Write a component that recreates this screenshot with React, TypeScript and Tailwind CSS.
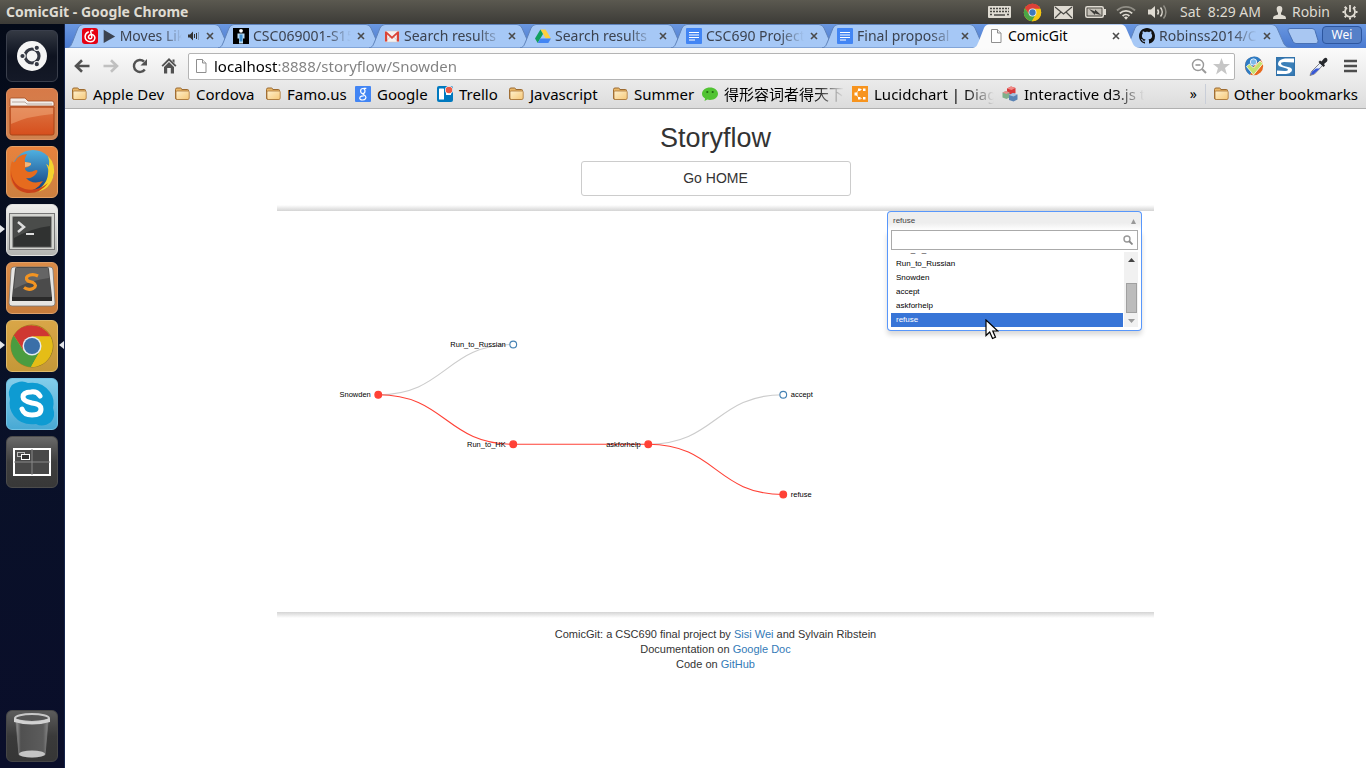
import React from "react";

const UI = "font-['Noto_Sans','Noto_Sans_CJK_SC',sans-serif]";

/* ---------- favicons and small glyphs ---------- */

function FolderIcon() {
  return (
    <svg width="16" height="16" viewBox="0 0 16 16" aria-hidden="true">
      <defs>
        <linearGradient id="fold" x1="0" y1="0" x2="1" y2="1">
          <stop offset="0" stopColor="#fff0cc" />
          <stop offset="1" stopColor="#f6c878" />
        </linearGradient>
      </defs>
      <path d="M1.5 3.5q0-1.5 1.5-1.5h3.5q1 0 1.300 1.500h5.700q1 0 1 1v7.500q0 1.500-1.500 1.500h-10q-1.500 0-1.500-1.500z" fill="#e9b767" stroke="#9c6a30" />
      <path d="M2 6q0-1 1-1h11.500q.7 0 .7 1v6q0 1.500-1.500 1.500H3.500q-1.500 0-1.500-1.500z" fill="url(#fold)" stroke="#a9773c" strokeWidth=".8" />
    </svg>
  );
}

function PageIcon() {
  return (
    <svg width="16" height="16" viewBox="0 0 16 16" aria-hidden="true">
      <path d="M3.500 1.500h6l3.500 3.500v9.500h-9.500z" fill="#fff" stroke="#8f8f8f" />
      <path d="M9.500 1.500v3.500h3.500" fill="#eee" stroke="#8f8f8f" />
    </svg>
  );
}

function MusicIcon() {
  return (
    <svg width="16" height="16" viewBox="0 0 16 16" aria-hidden="true">
      <rect width="16" height="16" rx="3" fill="#e60012" />
      <path d="M10.800 2.600c-1.300-.7-2.300.2-2 1.500l1 4.300c.3 1.600-.8 2.400-1.900 2.300-1.300-.2-1.900-1.700-1.100-2.900.7-1.100 2.100-1.500 3.400-1.200 2 .4 3 2.200 2.600 4-.4 1.900-2.300 3.100-4.500 3.100-3.100 0-5.300-2.300-5.200-5.200.1-2 1.300-3.700 3.200-4.500" fill="none" stroke="#fff" strokeWidth="1.500" strokeLinecap="round" />
    </svg>
  );
}

function SfsuIcon() {
  return (
    <svg width="16" height="16" viewBox="0 0 16 16" aria-hidden="true">
      <rect width="16" height="16" fill="#000" />
      <circle cx="8" cy="2.800" r="1.900" fill="#fff" />
      <path d="M4.500 5.500h7v5h-1.500v5h-4v-5h-1.500z" fill="#b9dcf5" />
      <path d="M6.500 6.500h3v7h-3z" fill="#3f8fd0" />
    </svg>
  );
}

function GmailIcon() {
  return (
    <svg width="16" height="16" viewBox="0 0 16 16" aria-hidden="true">
      <rect x="1" y="3" width="14" height="11" rx="1" fill="#f5f2f0" stroke="#c9c2c0" strokeWidth=".5" />
      <path d="M2.500 13 6.500 8.500M13.500 13l-4-4.500" stroke="#d5cfcd" fill="none" />
      <path d="M1 13.500V3.500h1.500L8 8.500l5.500-5H15v10h-2.200V6.600L8 10.900 3.200 6.600v6.900z" fill="#db4437" />
    </svg>
  );
}

function DriveIcon() {
  return (
    <svg width="16" height="16" viewBox="0 0 16 16" aria-hidden="true">
      <path d="M5.400 1.500h5.200L16 10.500h-5.200z" fill="#ffcf3f" />
      <path d="M5.400 1.500 8 6 2.700 15 0 10.500z" fill="#11a05e" />
      <path d="M5.400 10.500H16L13.300 15H2.700z" fill="#4285f4" />
    </svg>
  );
}

function DocsIcon() {
  return (
    <svg width="16" height="16" viewBox="0 0 16 16" aria-hidden="true">
      <rect width="16" height="16" rx="1" fill="#4285f4" />
      <path d="M3 4.500h10M3 7h10M3 9.500h10M3 12h6" stroke="#fff" strokeWidth="1.200" />
    </svg>
  );
}

function GithubIcon() {
  return (
    <svg width="16" height="16" viewBox="0 0 16 16" aria-hidden="true">
      <path
        fill="#111"
        d="M8 0C3.580 0 0 3.580 0 8c0 3.540 2.290 6.530 5.470 7.590.4.070.55-.17.55-.38 0-.19-.01-.82-.01-1.490-2.010.37-2.530-.49-2.690-.94-.09-.23-.48-.94-.82-1.130-.28-.15-.68-.52-.01-.53.63-.01 1.080.58 1.230.82.72 1.210 1.870.87 2.330.66.07-.52.28-.87.51-1.070-1.780-.2-3.640-.89-3.640-3.950 0-.87.31-1.590.82-2.150-.08-.2-.36-1.020.08-2.120 0 0 .67-.21 2.200.82.64-.18 1.320-.27 2-.27s1.360.09 2 .27c1.530-1.040 2.200-.82 2.200-.82.44 1.100.16 1.920.08 2.120.51.56.82 1.270.82 2.150 0 3.070-1.870 3.750-3.650 3.950.29.25.54.73.54 1.480 0 1.070-.01 1.930-.01 2.200 0 .21.15.46.55.38A8.010 8.010 0 0 0 16 8c0-4.420-3.580-8-8-8"
      />
    </svg>
  );
}

function GoogleIcon() {
  return (
    <svg width="16" height="16" viewBox="0 0 16 16" aria-hidden="true">
      <rect width="16" height="16" rx="1" fill="#4285f4" />
      <ellipse cx="7.800" cy="5" rx="2.200" ry="2.500" fill="none" stroke="#fff" strokeWidth="1.200" />
      <path d="M8.500 2.300h2.800M9 7.200c-2.500 1 .2 1.600 1.200 2.600 1.800 1.900 0 4.200-2.500 4.200-2.400 0-3.700-1.600-2.600-3 .9-1 2.500-1.100 3.600-1.100" fill="none" stroke="#fff" strokeWidth="1.200" />
    </svg>
  );
}

function TrelloIcon() {
  return (
    <svg width="16" height="16" viewBox="0 0 16 16" aria-hidden="true">
      <rect width="16" height="16" rx="2" fill="#0079bf" />
      <rect x="2" y="2.500" width="5" height="11" rx=".6" fill="#fff" />
      <rect x="9" y="3" width="5" height="6" rx=".6" fill="#fff" />
      <circle cx="12" cy="4" r="4" fill="#fff" />
      <circle cx="12" cy="4" r="3.300" fill="#eb5a46" />
    </svg>
  );
}

function WechatIcon() {
  return (
    <svg width="16" height="16" viewBox="0 0 16 16" aria-hidden="true">
      <path d="M8 1.500c4.400 0 8 2.700 8 6.200s-3.600 6.200-8 6.200c-1 0-1.900-.1-2.700-.4L2.500 15l.6-2.600C1.200 11.300 0 9.600 0 7.700c0-3.500 3.600-6.200 8-6.200z" fill="#51c332" />
      <circle cx="5.300" cy="6" r="1.100" fill="#1f6a10" />
      <circle cx="10.700" cy="6" r="1.100" fill="#1f6a10" />
    </svg>
  );
}

function LucidIcon() {
  return (
    <svg width="16" height="16" viewBox="0 0 16 16" aria-hidden="true">
      <rect width="16" height="16" fill="#f7941e" />
      <path d="M9.500 3.500H7L4 8l3 4.500h2.500" fill="none" stroke="#fff" strokeDasharray="2 1" />
      <path d="M2.500 6.500h3v3h-3zM6 2.500h2.500V5H6zM6 11h2.500v2.500H6zM11 2.500h2.500V5H11zM11 11h2.500v2.500H11z" fill="#fff" />
    </svg>
  );
}

function CubesIcon() {
  return (
    <svg width="16" height="16" viewBox="0 0 16 16" aria-hidden="true">
      <path d="M5 2.500 9 .5l4.500 1.500v5L9.500 9 5 7.500z" fill="#d9383a" />
      <path d="M5 2.500 9.500 4l4-2L9 .5z" fill="#f08a86" />
      <path d="M.5 6.500 4 5l3.500 1.500v5L4.500 13 .5 11.500z" fill="#7fb08a" />
      <path d="M.5 6.500 4.500 8l3-1.500L4 5z" fill="#e98b8b" />
      <path d="M7 9l4-2 4.500 1.500v5l-4 2L7 14z" fill="#5a83b4" />
      <path d="M7 9l4.500 1.500 4-2L11 7z" fill="#a9c3df" />
    </svg>
  );
}

function CloseGlyph() {
  return (
    <svg width="8" height="8" viewBox="0 0 8 8" aria-hidden="true">
      <path d="M1 1l6 6M7 1L1 7" stroke="#4a4a4a" strokeWidth="1.600" />
    </svg>
  );
}

/* ---------- desktop panel ---------- */

function ChromeLogo({ size }: { size: number }) {
  return (
    <svg width={size} height={size} viewBox="0 0 48 48" aria-hidden="true">
      <circle cx="24" cy="24" r="22" fill="#f1c40f" />
      <path d="M24 24 4.950 13A22 22 0 0 1 43.050 13z" fill="#d93a35" />
      <path d="M4.950 13A22 22 0 0 1 43.700 14.500H24L15.500 29z" fill="#dd4038" />
      <path d="M4.950 13A22 22 0 0 0 22.500 45.950L32.500 29 24 33 15.500 29z" fill="#4aa546" />
      <path d="M43.700 14.500A22 22 0 0 1 22.500 45.950L32.500 29 33 20 24 14.500z" fill="#f3c613" />
      <circle cx="24" cy="24" r="10" fill="#eef3f8" />
      <circle cx="24" cy="24" r="8" fill="#3b78bd" />
    </svg>
  );
}

function TopPanel() {
  return (
    <header className="flex h-6 items-center justify-between bg-linear-to-b from-[#5b5950] to-[#3c3b37] pr-2 pl-1.5 text-sm text-[#dfdbd2]">
      <h1 className="font-bold">ComicGit - Google Chrome</h1>
      <div className="flex items-center">
        <svg className="mr-3" width="23" height="12" viewBox="0 0 23 12" aria-hidden="true">
          <rect width="23" height="12" rx="1" fill="#dfdbd2" />
          <path d="M2 2.500h19M2 5.500h19M2 8.500h2M19 8.500h2" stroke="#4a4944" strokeWidth="1.500" strokeDasharray="2 1" />
          <path d="M6 9h11" stroke="#4a4944" strokeWidth="1.500" />
        </svg>
        <span className="mr-3">
          <ChromeLogo size={19} />
        </span>
        <svg className="mr-3" width="19" height="13" viewBox="0 0 19 13" aria-hidden="true">
          <rect width="19" height="13" rx="1" fill="#dfdbd2" />
          <path d="M1 1l8.500 7L18 1M1 12l6-6M18 12l-6-6" fill="none" stroke="#4a4944" strokeWidth="1.200" />
        </svg>
        <svg className="mr-2.5" width="21" height="12" viewBox="0 0 21 12" aria-hidden="true">
          <rect x=".75" y=".75" width="17.500" height="10.500" rx="1.500" fill="none" stroke="#dfdbd2" strokeWidth="1.500" />
          <rect x="2.500" y="2.500" width="14" height="7" fill="#c3bfb6" />
          <rect x="19" y="3" width="2" height="6" fill="#dfdbd2" />
          <path d="M4 3l6 2.500V3.500L16 9l-6-1.500V9z" fill="#3c3b37" />
        </svg>
        <svg className="mr-3" width="20" height="15" viewBox="0 0 20 15" fill="none" aria-hidden="true">
          <path d="M1 5.500a13 13 0 0 1 18 0" stroke="#908e86" strokeWidth="1.800" />
          <path d="M3.800 8.300a9 9 0 0 1 12.400 0" stroke="#dfdbd2" strokeWidth="1.800" />
          <path d="M6.600 11a5 5 0 0 1 6.800 0" stroke="#dfdbd2" strokeWidth="1.800" />
          <path d="M8 12.500a3 3 0 0 1 4 0l-2 2.200z" fill="#dfdbd2" />
        </svg>
        <svg className="mr-3" width="20" height="16" viewBox="0 0 20 16" fill="none" aria-hidden="true">
          <path d="M0 5.500h3L7 2v12l-4-3.500H0z" fill="#dfdbd2" />
          <path d="M9.500 5.500a4 4 0 0 1 0 5" stroke="#dfdbd2" strokeWidth="1.500" />
          <path d="M12.500 3.500a7 7 0 0 1 0 9" stroke="#dfdbd2" strokeWidth="1.500" />
          <path d="M15.500 1.500a10 10 0 0 1 0 13" stroke="#908e86" strokeWidth="1.500" />
        </svg>
        <time className="mr-3 whitespace-pre">Sat  8:29 AM</time>
        <svg className="mr-1.5" width="13" height="13" viewBox="0 0 13 13" aria-hidden="true">
          <path d="M6.500 0C8.800 0 9.500 1.500 9.300 3.500 9.200 5 8.600 6.300 8 7v1.500l4 1.500q1 .5 1 3H0q0-2.500 1-3l4-1.500V7C4.400 6.300 3.800 5 3.700 3.500 3.500 1.500 4.200 0 6.500 0z" fill="#dfdbd2" />
        </svg>
        <span className="mr-3">Robin</span>
        <svg width="16" height="16" viewBox="0 0 16 16" fill="none" aria-hidden="true">
          <path d="M5 3.800a5 5 0 1 0 6 0" stroke="#dfdbd2" strokeWidth="1.800" />
          <path d="M8 1v7" stroke="#dfdbd2" strokeWidth="1.800" />
          <path d="M.5 8h2M13.500 8h2M8 13.500v2M2.700 2.700l1.500 1.500M13.300 2.700l-1.500 1.500M2.700 13.300l1.500-1.500M13.300 13.300l-1.500-1.500" stroke="#dfdbd2" strokeWidth="2" />
        </svg>
      </div>
    </header>
  );
}

/* ---------- launcher ---------- */

const tiles: { name: string; tone: string; art: React.ReactNode; left?: boolean; right?: boolean }[] = [
  {
    name: "Dash home",
    tone: "bg-linear-to-b from-[#343943] via-[#0e1320] to-[#141927] border-[#3a3f4c]",
    art: (
      <g>
        <circle cx="26" cy="26" r="15" fill="#f5f5f5" />
        <circle cx="26" cy="26" r="7" fill="none" stroke="#343843" strokeWidth="3.200" />
        <g fill="#343843" stroke="#f5f5f5" strokeWidth="1.200">
          <circle cx="16.500" cy="26" r="2.700" />
          <circle cx="30.800" cy="17.800" r="2.700" />
          <circle cx="30.800" cy="34.200" r="2.700" />
        </g>
      </g>
    ),
  },
  {
    name: "Files",
    tone: "bg-linear-to-b from-[#d77a48] to-[#cf8350] border-[#dd9163]",
    art: (
      <g>
        <path d="M4 18v-7q0-1 1-1h14l3 3h24q2 0 2 2v3z" fill="#f3eee9" stroke="#a34d25" strokeWidth=".8" />
        <path d="M6 14h13l2 2h25" fill="none" stroke="#b8a9a0" />
        <path d="M4 19h44v26q0 2-2 2H6q-2 0-2-2z" fill="url(#files)" stroke="#a84418" />
        <path d="M5 20h42v6Q22 28 5 36z" fill="#f5b384" opacity=".45" />
      </g>
    ),
  },
  {
    name: "Firefox",
    tone: "bg-linear-to-b from-[#e8823d] to-[#cc8040] border-[#e5a065]",
    art: (
      <g>
        <circle cx="27" cy="25" r="21" fill="url(#globe)" />
        <path d="M42 10q9 9 5 22-5 14-20 14 14-6 15-18 1-6-2-10 3 1 3 3 1-6-1-11z" fill="#f6d32d" />
        <path d="M6 15q2 3 4-1 2-5 11-6-3 5-2 8l6 1q1 3-6 5 0 3 4 4 3 0 7-2 3 0 0 4-4 5-10 4 6 7 17 3-7 11-19 11Q6 44 4 29 4 20 6 15z" fill="#e66b1e" />
        <path d="M5 25q1 14 14 18 12 3 23-6-8 11-21 10Q5 44 5 25z" fill="#c9421b" />
        <path d="M19 16l6 1q1 3-6 4z" fill="#f2b77c" />
      </g>
    ),
  },
  {
    name: "Terminal",
    tone: "bg-linear-to-b from-[#eeeeec] to-[#b4b5b2] border-[#e2e2e0]",
    left: true,
    art: (
      <g>
        <rect x="3.500" y="9.500" width="45" height="36" fill="#d3d4d0" stroke="#777" />
        <rect x="7" y="13" width="38" height="30" fill="#303231" stroke="#555" />
        <path d="M8 14h36v8Q26 24 8 34z" fill="#4a4c4a" />
        <path d="M12 18l6 5-6 5" fill="none" stroke="#ddd" strokeWidth="2.500" />
        <path d="M20 30h8" stroke="#ddd" strokeWidth="2" />
      </g>
    ),
  },
  {
    name: "Sublime Text",
    tone: "bg-linear-to-b from-[#db8c48] to-[#c77c3c] border-[#dfa069]",
    art: (
      <g>
        <path d="M5 8q0-3 3-3h36q3 0 3 3l2 33q0 3-3 3H6q-3 0-3-3z" fill="#e6e5e3" stroke="#777" strokeWidth=".8" />
        <path d="M9 7q0-2 2-2h30q2 0 2 2l3 28H6z" fill="#4b4b4b" />
        <path d="M6 35h40v4H6z" fill="#2a2a2a" />
        <path d="M10 6h32l1 10Q25 18 8 27z" fill="#777" opacity=".6" />
        <path d="M32 14q-4-2-8-1-6 2-2 6l5 1.500q5 3 0 6-5 2-9-1" fill="none" stroke="#f29422" strokeWidth="3.200" />
      </g>
    ),
  },
  {
    name: "Google Chrome",
    tone: "bg-linear-to-b from-[#d9a647] to-[#c59838] border-[#dfba6b]",
    left: true,
    right: true,
    art: (
      <g>
        <circle cx="26" cy="26" r="21" fill="#f1c40f" stroke="#8d7224" strokeWidth=".8" />
        <path d="M7.800 15.500A21 21 0 0 1 44.300 16.500H26L17.800 31z" fill="#cf3832" />
        <path d="M7.800 15.500A21 21 0 0 0 25 47L34.200 30.700 26 35 17.800 31z" fill="#4a9c40" />
        <path d="M44.300 16.500A21 21 0 0 1 25 47L34.200 30.700 35 21 26 16.500z" fill="#e5bd17" />
        <circle cx="26" cy="26" r="9.500" fill="#e4ebf2" />
        <circle cx="26" cy="26" r="8" fill="#3a6fa8" />
      </g>
    ),
  },
  {
    name: "Skype",
    tone: "bg-linear-to-b from-[#83cdea] to-[#48a9d4] border-[#74c3e4]",
    art: (
      <g>
        <path d="M6 7q9-6 16-2 14-2 22 9 5 7 3 16 3 8-2 14-8 6-15 2-14 2-22-8-6-8-4-17-3-8 2-14z" fill="#0e9bd2" />
        <path d="M34 18q-3-5-9-4-8 0-8 5 0 4 9 6 9 1 9 6 0 6-9 6-8 0-10-6" fill="none" stroke="#fff" strokeWidth="5" strokeLinecap="round" />
      </g>
    ),
  },
  {
    name: "Workspace switcher",
    tone: "bg-linear-to-b from-[#6a6a6a] via-[#3d3d3d] to-[#383838] border-[#4c4c4c]",
    art: (
      <g fill="none">
        <rect x="8" y="13" width="36" height="26" fill="#484848" stroke="#fff" strokeWidth="2" />
        <path d="M26 13v26M8 26h36" stroke="#888" />
        <rect x="11.500" y="16.500" width="7" height="4" stroke="#bbb" />
        <rect x="15.500" y="18.500" width="8" height="5" fill="#333" stroke="#fff" />
      </g>
    ),
  },
];

function Tile({ name, tone, art, left, right }: (typeof tiles)[number]) {
  return (
    <div className="relative flex w-full justify-center">
      {left && (
        <svg className="absolute top-5 left-0" width="5" height="10" viewBox="0 0 5 10" aria-hidden="true">
          <path d="M0 1l5 4-5 4z" fill="#e4e6ea" />
        </svg>
      )}
      <button type="button" aria-label={name} className={"flex size-[52px] items-center justify-center rounded-md border " + tone}>
        <svg width="52" height="52" viewBox="0 0 52 52" className="shrink-0" aria-hidden="true">
          {art}
        </svg>
      </button>
      {right && (
        <svg className="absolute top-5 right-0" width="5" height="10" viewBox="0 0 5 10" aria-hidden="true">
          <path d="M5 1L0 5l5 4z" fill="#e4e6ea" />
        </svg>
      )}
    </div>
  );
}

function Launcher() {
  return (
    <nav aria-label="Launcher" className="flex w-[65px] shrink-0 flex-col gap-1.5 border-r border-[#16254c] bg-linear-to-b from-[#040a18] via-[#091128] to-[#0a0e2a] py-1.5">
      <svg width="0" height="0" className="absolute" aria-hidden="true">
        <defs>
          <linearGradient id="files" x1="0" y1="0" x2="0" y2="1">
            <stop offset="0" stopColor="#dc7442" />
            <stop offset="1" stopColor="#d64f1d" />
          </linearGradient>
          <linearGradient id="globe" x1="0" y1="0" x2="0" y2="1">
            <stop offset="0" stopColor="#4fb0e0" />
            <stop offset="1" stopColor="#103a7c" />
          </linearGradient>
          <linearGradient id="glass" x1="0" y1="0" x2="1" y2="0">
            <stop offset="0" stopColor="#999" />
            <stop offset=".15" stopColor="#505050" />
            <stop offset=".85" stopColor="#5c5c5c" />
            <stop offset="1" stopColor="#888" />
          </linearGradient>
        </defs>
      </svg>
      {tiles.map((t) => (
        <Tile key={t.name} {...t} />
      ))}
      <div className="mt-auto">
        <Tile
          name="Trash"
          tone="bg-linear-to-b from-[#5c5c5c] via-[#3a3a3a] to-[#363636] border-[#464646]"
          art={
            <g>
              <path d="M10 12h32l-3 33q-13 4-26 0z" fill="url(#glass)" stroke="#777" strokeWidth=".8" />
              <ellipse cx="26" cy="44" rx="13" ry="3.500" fill="#c4c4c4" />
              <ellipse cx="26" cy="8" rx="17" ry="4" fill="#555" stroke="#c8c8c8" strokeWidth="2" />
              <path d="M8 8q18 8 36 0v4q-18 5-36 0z" fill="#d2d2d2" />
            </g>
          }
        />
      </div>
    </nav>
  );
}

/* ---------- browser chrome ---------- */

const tabs: { title: string; icon: React.ReactNode; active?: boolean; sound?: boolean }[] = [
  { title: "▶ Moves Like", icon: <MusicIcon />, sound: true },
  { title: "CSC069001-S15", icon: <SfsuIcon /> },
  { title: "Search results", icon: <GmailIcon /> },
  { title: "Search results", icon: <DriveIcon /> },
  { title: "CSC690 Project", icon: <DocsIcon /> },
  { title: "Final proposal", icon: <DocsIcon /> },
  { title: "ComicGit", icon: <PageIcon />, active: true },
  { title: "Robinss2014/C", icon: <GithubIcon /> },
];

const FADE = "[mask-image:linear-gradient(to_right,black_75%,transparent)]";

function TabStrip() {
  return (
    <div className="flex h-6 items-end bg-linear-to-b from-[#6a97e0] to-[#4a7ad0] pr-1 pl-0.5">
      {tabs.map((t, i) => (
        <div key={i} className={"relative -mr-4 flex h-6 w-[167px] min-w-0 items-center pr-5 pl-[15px] " + (t.active ? "z-10" : "")}>
          <svg className="absolute inset-0 size-full" viewBox="0 0 167 24" preserveAspectRatio="none" aria-hidden="true">
            <path d="M0 24C4 23 4 21 5.500 18L11 4Q12.500 .5 16 .5H148Q151.500 .5 153 4L160 20Q161.500 23.500 167 24Z" fill={t.active ? "#fbfbfb" : "#a6c8f6"} stroke={t.active ? "#fbfbfb" : "#5f83bb"} strokeWidth={t.active ? 0 : 1} />
          </svg>
          <a href="#" className="relative flex min-w-0 flex-1 items-center gap-1">
            <span className="shrink-0">{t.icon}</span>
            <span className={"flex-1 overflow-hidden text-sm leading-6 whitespace-nowrap " + (t.active ? "text-black" : "text-[#3c4350] " + FADE)}>{t.title}</span>
          </a>
          {t.sound && (
            <svg className="relative ml-1.5" width="12" height="10" viewBox="0 0 12 10" fill="none" aria-hidden="true">
              <path d="M0 3.500h2L5 .5v9l-3-3H0z" fill="#333" />
              <path d="M6.500 3v4M8.500 2v6" stroke="#333" />
              <path d="M10.500 1v8" stroke="#8098b8" />
            </svg>
          )}
          <button type="button" aria-label={"Close " + t.title} className="relative ml-1.5 shrink-0">
            <CloseGlyph />
          </button>
        </div>
      ))}
      <button type="button" aria-label="New tab" className="ml-3 self-center">
        <svg width="32" height="16" viewBox="0 0 32 16" aria-hidden="true">
          <path d="M3 .5h22q2 0 3 2l3 10q.5 3-2 3H9q-2 0-3-2L1 3q-.5-2.500 2-2.500z" fill="#a9c7f2" stroke="#4870b4" />
        </svg>
      </button>
      <button type="button" className="mb-1 ml-auto h-[18px] w-10 rounded-sm border border-[#2d569f] bg-[#5580c8] text-xs leading-4 text-white">
        Wei
      </button>
    </div>
  );
}

function Toolbar() {
  return (
    <div className="flex h-9 items-center bg-linear-to-b from-[#fbfbfb] to-[#e9e9e9] pr-[9px] pl-[9px]">
      <button type="button" aria-label="Back" className="mr-[13px]">
        <svg width="16" height="14" viewBox="0 0 16 14" fill="none" aria-hidden="true">
          <path d="M15.500 7H2.500M8 1.200 2 7l6 5.800" stroke="#525252" strokeWidth="2.600" />
        </svg>
      </button>
      <button type="button" aria-label="Forward" className="mr-[13px]">
        <svg width="16" height="14" viewBox="0 0 16 14" fill="none" aria-hidden="true">
          <path d="M.5 7h13M8 1.200 14 7l-6 5.800" stroke="#c0c0c0" strokeWidth="2.600" />
        </svg>
      </button>
      <button type="button" aria-label="Reload" className="mr-[13px]">
        <svg width="16" height="16" viewBox="0 0 16 16" fill="none" aria-hidden="true">
          <path d="M12.800 11.500A6 6 0 1 1 12 3.500" stroke="#525252" strokeWidth="2.400" />
          <path d="M15 1v6.500H8.500z" fill="#525252" />
        </svg>
      </button>
      <button type="button" aria-label="Home" className="mr-[11px]">
        <svg width="16" height="16" viewBox="0 0 16 16" aria-hidden="true">
          <path d="M8 0l7.500 7.500-1.300 1.300L8 2.700 1.800 8.800.5 7.500zM11.500 1.500h2v3.500l-2-2z" fill="#525252" />
          <path d="M8 4l5 5v6.500H9.800V10H6.200v5.500H3V9z" fill="#525252" />
        </svg>
      </button>
      <div className="flex h-[27px] min-w-0 flex-1 items-center rounded-xs border border-[#b4b4b4] bg-white pr-1 pl-1">
        <PageIcon />
        <input
          type="text"
          aria-label="Address"
          defaultValue="localhost:8888/storyflow/Snowden"
          className="ml-[5px] min-w-0 flex-1 bg-[linear-gradient(to_right,#000_64px,#808080_64px)] bg-clip-text text-[15px] leading-6 text-transparent outline-none"
        />
        <svg width="16" height="16" viewBox="0 0 16 16" fill="none" aria-hidden="true">
          <circle cx="7" cy="7" r="5.500" stroke="#999" strokeWidth="1.400" />
          <path d="M4.500 7h5" stroke="#888" strokeWidth="1.400" />
          <path d="M11 11l4 4" stroke="#999" strokeWidth="2" />
        </svg>
        <svg className="ml-1.5" width="17" height="17" viewBox="0 0 17 17" aria-hidden="true">
          <path d="M8.500 0l2.200 6H17l-5 4 1.900 6.500-5.400-3.900-5.400 3.900L5 10 0 6h6.300z" fill="#c6c6c6" />
        </svg>
      </div>
      <button type="button" aria-label="Check extension" className="ml-[9px]">
        <svg width="20" height="20" viewBox="0 0 20 20" aria-hidden="true">
          <circle cx="10" cy="10" r="9.200" fill="#e86a1e" />
          <path d="M1 9A9 9 0 0 1 17 4L10 9 6 19Q1 16 1 9z" fill="#2e7cc4" />
          <circle cx="9.500" cy="6" r="3.200" fill="#7db8ea" stroke="#fff" strokeWidth=".8" />
          <path d="M2.500 10.500l3-2.500 4 4 6.500-7 3 2.500L9.500 19z" fill="#c5e26d" stroke="#fff" strokeWidth=".8" />
        </svg>
      </button>
      <button type="button" aria-label="Stylish" className="ml-3">
        <svg width="19" height="19" viewBox="0 0 19 19" fill="none" aria-hidden="true">
          <rect x=".75" y=".75" width="17.500" height="17.500" fill="#3a7fb8" stroke="#3273ab" strokeWidth="1.500" />
          <path d="M18 5.500L8 5Q5 5 5 6.500T8 9l6 1.500Q17 12 15.500 14.500 14 16.500 10 17H1v-3.500l8 .5q3 0 3-1.200T9 11L4 9.500Q1 8 2.500 5 4 2 9 1.500h9z" fill="#fff" />
        </svg>
      </button>
      <button type="button" aria-label="Color picker" className="ml-3.5">
        <svg width="19" height="19" viewBox="0 0 19 19" aria-hidden="true">
          <path d="M11 6l2.500 2.500-8 8.500-4.500 1.500L2.500 14.500z" fill="#e8eefb" stroke="#777" strokeWidth=".9" />
          <path d="M7 11.500h4L5 17l-3.500 1 1.500-3.500z" fill="#3758d6" />
          <path d="M9.500 5l1.500-1.500 1.500 1L15 1.500q2-1.500 3 0t0 3L15 7l1 1.500-1.500 1.500z" fill="#26282c" />
        </svg>
      </button>
      <button type="button" aria-label="Menu" className="ml-4">
        <svg width="13" height="14" viewBox="0 0 13 14" aria-hidden="true">
          <path d="M0 2h13M0 7h13M0 12h13" stroke="#4d4d4d" strokeWidth="2.600" />
        </svg>
      </button>
    </div>
  );
}

const bookmarks: { label: string; icon: React.ReactNode; width: string; long?: boolean }[] = [
  { label: "Apple Dev", icon: <FolderIcon />, width: "w-[103px]" },
  { label: "Cordova", icon: <FolderIcon />, width: "w-[91px]" },
  { label: "Famo.us", icon: <FolderIcon />, width: "w-[90px]" },
  { label: "Google", icon: <GoogleIcon />, width: "w-[82px]" },
  { label: "Trello", icon: <TrelloIcon />, width: "w-[71px]" },
  { label: "Javascript", icon: <FolderIcon />, width: "w-[104px]" },
  { label: "Summer", icon: <FolderIcon />, width: "w-[90px]" },
  { label: "得形容词者得天下", icon: <WechatIcon />, width: "w-[150px]", long: true },
  { label: "Lucidchart | Diagr", icon: <LucidIcon />, width: "w-[150px]", long: true },
  { label: "Interactive d3.js t", icon: <CubesIcon />, width: "w-[150px]", long: true },
];

function BookmarksBar() {
  return (
    <nav aria-label="Bookmarks" className="flex h-[25px] items-start border-b border-[#b0b0b0] bg-linear-to-b from-[#e9e9e9] to-[#dcdcdc] pr-2 pl-1.5 text-[15px] leading-5 text-black">
      {bookmarks.map((b) => (
        <a key={b.label} href="#" className={"flex items-center gap-1.5 " + b.width}>
          <span className="shrink-0">{b.icon}</span>
          <span className={"whitespace-nowrap " + (b.long ? "mr-2 overflow-hidden " + FADE : "")}>{b.label}</span>
        </a>
      ))}
      <button type="button" aria-label="More bookmarks" className="mr-2 ml-auto text-sm leading-5">
        »
      </button>
      <a href="#" className="flex items-center gap-[5px] border-l border-[#c9ced8] pl-[7px] whitespace-nowrap">
        <FolderIcon />
        Other bookmarks
      </a>
    </nav>
  );
}

/* ---------- page ---------- */

const nodes = [
  { name: "Snowden", x: 135, y: 245, on: true, end: true },
  { name: "Run_to_Russian", x: 315, y: 178, on: false, end: true },
  { name: "Run_to_HK", x: 315, y: 311, on: true, end: true },
  { name: "askforhelp", x: 495, y: 311, on: true, end: true },
  { name: "accept", x: 675, y: 245, on: false, end: false },
  { name: "refuse", x: 675, y: 378, on: true, end: false },
];

const links: [number, number, boolean][] = [
  [0, 1, false],
  [3, 4, false],
  [0, 2, true],
  [2, 3, true],
  [3, 5, true],
];

function StoryTree() {
  return (
    <svg width="600" height="402" viewBox="0 0 800 536" className="min-w-0" role="img" aria-label="Story tree">
      {links.map(([a, b, on]) => {
        const s = nodes[a];
        const t = nodes[b];
        const m = (s.x + t.x) / 2;
        return <path key={a + "-" + b} d={`M${s.x} ${s.y}C${m} ${s.y} ${m} ${t.y} ${t.x} ${t.y}`} fill="none" stroke={on ? "#ff4136" : "#ccc"} strokeWidth="1.500" />;
      })}
      {nodes.map((n) => (
        <g key={n.name}>
          <circle cx={n.x} cy={n.y} r="4.500" fill={n.on ? "#ff4136" : "#fff"} stroke={n.on ? "#ff4136" : "#4682b4"} strokeWidth="1.500" />
          <text x={n.end ? n.x - 10 : n.x + 10} y={n.y} dy=".35em" textAnchor={n.end ? "end" : "start"} fontSize="10" fill="#000">
            {n.name}
          </text>
        </g>
      ))}
    </svg>
  );
}

const options = ["Run_to_HK", "Run_to_Russian", "Snowden", "accept", "askforhelp", "refuse"];

function StoryPicker() {
  return (
    <div className="relative mr-3 w-[255px] shrink-0 self-start text-[8px] text-black">
      <button type="button" aria-haspopup="listbox" aria-expanded="true" className="flex h-[19px] w-full items-center justify-between rounded-t border border-b-0 border-[#5897fb] bg-linear-to-b from-[#eee] from-60% to-white px-[5px] text-[#444]">
        refuse
        <svg width="5" height="5" viewBox="0 0 5 5" aria-hidden="true">
          <path d="M2.500 0L5 5H0z" fill="#999" />
        </svg>
      </button>
      <div className="rounded-b border border-t-0 border-[#5897fb] bg-white px-[3px] pb-[3px] shadow-[0_4px_5px_rgba(0,0,0,0.15)]">
        <label className="flex h-5 items-center border border-[#aaa] bg-white pr-1">
          <input type="text" aria-label="Search stories" className="min-w-0 flex-1 px-1 outline-none" />
          <svg width="10" height="10" viewBox="0 0 10 10" fill="none" aria-hidden="true">
            <circle cx="4" cy="4" r="3" stroke="#999" strokeWidth="1.400" />
            <path d="M6 6l3.500 3.500" stroke="#888" strokeWidth="1.800" />
          </svg>
        </label>
        <div className="mt-0.5 flex h-[75px]">
          <ul role="listbox" aria-label="Stories" className="flex min-w-0 flex-1 flex-col justify-end overflow-hidden">
            {options.map((o) => (
              <li key={o} role="option" aria-selected={o === "refuse"} className={"h-3.5 shrink-0 px-[5px] leading-[14px] " + (o === "refuse" ? "bg-[#3875d7] text-white" : "")}>
                {o}
              </li>
            ))}
          </ul>
          <div className="ml-px flex w-3.5 flex-col items-center justify-between bg-[#f1f1f1] pt-1.5 pb-1">
            <svg width="7" height="4" viewBox="0 0 7 4" aria-hidden="true">
              <path d="M3.500 0L7 4H0z" fill="#444" />
            </svg>
            <span className="mt-auto mb-1.5 h-[30px] w-[11px] border border-[#a0a0a0] bg-[#bcbcbc]" />
            <svg width="7" height="4" viewBox="0 0 7 4" aria-hidden="true">
              <path d="M3.500 4L7 0H0z" fill="#999" />
            </svg>
          </div>
        </div>
      </div>
      <svg className="absolute top-[108px] left-[98px]" width="14" height="21" viewBox="0 0 14 21" aria-hidden="true">
        <path d="M1 1v15.500l3.700-3.500 2.800 6.500 3-1.300L7.800 12H12.800z" fill="#fff" stroke="#000" strokeWidth="1.200" />
      </svg>
    </div>
  );
}

export default function App() {
  return (
    <div className={"flex min-h-screen flex-col bg-white " + UI}>
      <TopPanel />
      <div className="flex flex-1">
        <Launcher />
        <div className="flex min-w-0 flex-1 flex-col">
          <TabStrip />
          <Toolbar />
          <BookmarksBar />
          <main className="mx-auto w-full max-w-[877px] font-['Liberation_Sans',sans-serif] text-[#333]">
            <header className="flex flex-col items-center pt-[13px]">
              <h2 className="mb-[7px] text-[27px] leading-8">Storyflow</h2>
              <button type="button" className="h-[35px] w-[270px] rounded-[3px] border border-[#ccc] bg-white pb-0.5 text-sm text-[#333]">
                Go HOME
              </button>
              <div className="mt-[9px] h-1.5 w-full bg-linear-to-b from-white to-[#d4d4d4]" />
            </header>
            <section className="flex h-[401px] justify-between">
              <StoryTree />
              <StoryPicker />
            </section>
            <footer className="text-center text-[11px] leading-[15px]">
              <div className="mb-[9px] h-1.5 bg-linear-to-b from-[#d4d4d4] to-white" />
              <p>
                ComicGit: a CSC690 final project by <a href="#" className="text-[#337ab7]">Sisi Wei</a> and Sylvain Ribstein
              </p>
              <p>
                Documentation on <a href="#" className="text-[#337ab7]">Google Doc</a>
              </p>
              <p>
                Code on <a href="#" className="text-[#337ab7]">GitHub</a>
              </p>
            </footer>
          </main>
        </div>
      </div>
    </div>
  );
}
